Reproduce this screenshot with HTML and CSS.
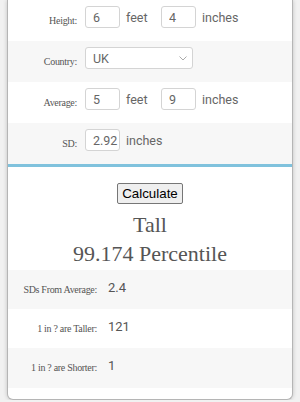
FILE: index.html
```html
<!DOCTYPE html>
<html lang="en">
<head>
  <meta charset="UTF-8">
  <meta name="viewport" content="width=device-width, initial-scale=1.0">
  <title>Height Percentile Calculator</title>
  <link rel="stylesheet" href="styles.css">
</head>
<body>
  <div class="card">
    <!-- Inputs -->
    <div class="form">
      <div class="row">
        <label class="label">Height:</label>
        <div class="field">
          <input class="num" type="text" value="6">
          <span class="unit">feet</span>
          <input class="num" type="text" value="4">
          <span class="unit">inches</span>
        </div>
      </div>
      <div class="row alt">
        <label class="label">Country:</label>
        <div class="field">
          <div class="select-wrap">
            <select class="select">
              <option>UK</option>
              <option>USA</option>
            </select>
            <svg class="chevron" width="8" height="5" viewBox="0 0 8 5"><path d="M0.5 0.5 L4 4 L7.5 0.5" fill="none" stroke="#aaa" stroke-width="1"/></svg>
          </div>
        </div>
      </div>
      <div class="row">
        <label class="label">Average:</label>
        <div class="field">
          <input class="num" type="text" value="5">
          <span class="unit">feet</span>
          <input class="num" type="text" value="9">
          <span class="unit">inches</span>
        </div>
      </div>
      <div class="row alt">
        <label class="label">SD:</label>
        <div class="field">
          <input class="num" type="text" value="2.92">
          <span class="unit">inches</span>
        </div>
      </div>
    </div>

    <!-- Result -->
    <div class="result">
      <button class="calc">Calculate</button>
      <div class="verdict">Tall</div>
      <div class="verdict">99.174 Percentile</div>
    </div>

    <div class="stats">
      <div class="stat alt">
        <div class="stat-label">SDs From Average:</div>
        <div class="stat-value">2.4</div>
      </div>
      <div class="stat">
        <div class="stat-label">1 in ? are Taller:</div>
        <div class="stat-value">121</div>
      </div>
      <div class="stat alt tall">
        <div class="stat-label">1 in ? are Shorter:</div>
        <div class="stat-value">1</div>
      </div>
    </div>
  </div>
</body>
</html>
```

FILE: styles.css
```css
/* Light card on a grey page */
body {
  margin: 0;
  background-color: #f1f1f1;
  font-family: "Liberation Serif", serif;
  color: #555;
}

.card {
  margin-left: 7px;
  width: 286px;
  box-sizing: border-box;
  background-color: #fff;
  border: 1px solid #b5b5b5;
  border-top: none;
  border-radius: 0 0 6px 6px;
  box-shadow: 0 0 4px rgba(0, 0, 0, 0.2);
  padding-bottom: 11px;
}

/* Form rows */
.row {
  display: flex;
  align-items: center;
  height: 41px;
  background-color: #fff;
}

.row.alt,
.stat.alt {
  background-color: #f7f7f7;
}

.label {
  width: 69px;
  flex-shrink: 0;
  text-align: right;
  font-size: 10px;
  line-height: 12px;
  letter-spacing: -0.3px;
  margin-right: 8px;
}

.field {
  display: flex;
  align-items: center;
  align-self: flex-start;
  padding-top: 6px;
}

.num,
.select {
  box-sizing: border-box;
  height: 22px;
  border: 1px solid #d4d4d4;
  border-radius: 3px;
  background-color: #fff;
  font-family: Roboto, "Liberation Sans", sans-serif;
  font-size: 12.5px;
  color: #666;
  outline: none;
}

.num {
  width: 35px;
  flex-shrink: 0;
  padding: 0 0 0 7px;
}

.unit {
  font-family: Roboto, "Liberation Sans", sans-serif;
  font-size: 12.5px;
  color: #666;
  width: 41px;
  flex-shrink: 0;
  padding-left: 6px;
  box-sizing: border-box;
}

.select-wrap {
  position: relative;
}

.select {
  width: 108px;
  padding: 0 0 0 7px;
  appearance: none;
  -webkit-appearance: none;
}

.chevron {
  position: absolute;
  right: 6px;
  top: 9px;
}

/* Result block */
.result {
  border-top: 3px solid #80c2dd;
  text-align: center;
  padding-top: 16px;
  padding-bottom: 2px;
}

.calc {
  height: 21px;
  padding: 0 4px;
  font-family: "Liberation Sans", Arial, sans-serif;
  font-size: 13.33px;
  color: #000;
  background-color: #efefef;
  border: 1px solid #767676;
  border-radius: 2px;
  margin-bottom: 6px;
}

.verdict {
  font-size: 22px;
  line-height: 29px;
  color: #555;
}

/* Stats table */
.stat {
  display: flex;
  height: 39px;
  background-color: #fff;
}

.stat.tall {
  height: 40px;
}

.stat-label {
  width: 89px;
  flex-shrink: 0;
  align-self: center;
  text-align: right;
  font-size: 10px;
  line-height: 12px;
  letter-spacing: -0.3px;
}

.stat-value {
  margin-left: 11px;
  padding-top: 10px;
  font-family: Roboto, "Liberation Sans", sans-serif;
  font-size: 13px;
  line-height: 16px;
  color: #555;
}
```
